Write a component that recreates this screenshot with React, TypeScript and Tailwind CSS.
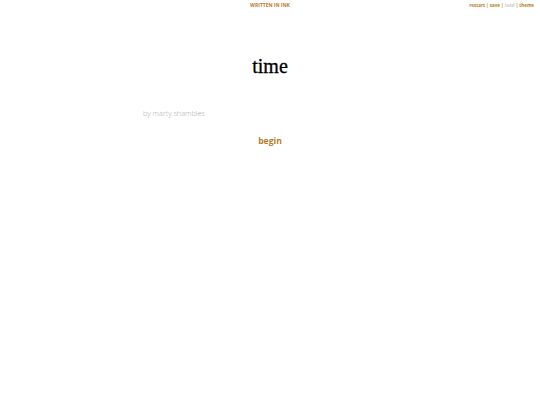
const controls = [
  { label: "restart", disabled: false },
  { label: "save", disabled: false },
  { label: "load", disabled: true },
  { label: "theme", disabled: false },
];

export default function App() {
  return (
    <div className="relative h-[405px] w-[540px] overflow-hidden bg-white font-['Open_Sans',sans-serif]">
      <div className="absolute left-0 top-0 w-full pt-[2px] text-center text-[5px] font-bold leading-[7px] text-[#b97c2c]">
        WRITTEN IN INK
      </div>
      <div className="absolute right-[6px] top-0 flex pt-[2px] text-[4.5px] font-bold leading-[7px]">
        {controls.map((c, i) => (
          <span key={c.label} className="whitespace-pre">
            <span className={c.disabled ? "text-[#cccccc]" : "text-[#b97c2c]"}>{c.label}</span>
            {i < controls.length - 1 && <span className="text-[#b97c2c]"> | </span>}
          </span>
        ))}
      </div>

      <div className="mx-auto w-[254px] pt-[52px]">
        <h1 className="text-center font-['Liberation_Serif',serif] text-[20px] leading-[28px] text-black [-webkit-text-stroke:0.3px_black]">
          time
        </h1>
        <p className="mt-[27px] text-[7.3px] font-light leading-[12px] text-[#aaaaaa]">by marty shambles</p>
        <div className="mt-[7px] text-center">
          <a className="text-[8.6px] font-bold leading-[12px] text-[#b97c2c]">begin</a>
        </div>
      </div>
    </div>
  );
}
